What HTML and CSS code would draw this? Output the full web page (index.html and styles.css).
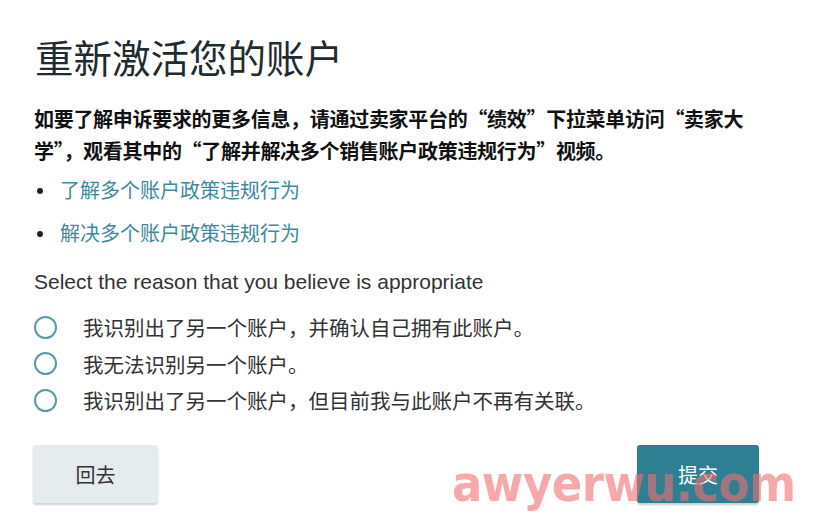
FILE: index.html
```html
<!DOCTYPE html>
<html lang="zh-CN">
<head>
  <meta charset="UTF-8">
  <title>重新激活您的账户</title>
  <link rel="stylesheet" href="styles.css">
</head>
<body>

<div class="page">
  <h1 class="title">重新激活您的账户</h1>

  <p class="intro">如要了解申诉要求的更多信息，请通过卖家平台的“绩效”下拉菜单访问“卖家大学”，观看其中的“了解并解决多个销售账户政策违规行为”视频。</p>

  <ul class="links">
    <li><a href="#">了解多个账户政策违规行为</a></li>
    <li><a href="#">解决多个账户政策违规行为</a></li>
  </ul>

  <div class="question">Select the reason that you believe is appropriate</div>

  <div class="options">
    <label class="option"><span class="radio"></span>我识别出了另一个账户，并确认自己拥有此账户。</label>
    <label class="option"><span class="radio"></span>我无法识别另一个账户。</label>
    <label class="option"><span class="radio"></span>我识别出了另一个账户，但目前我与此账户不再有关联。</label>
  </div>

  <div class="actions">
    <button class="btn btn-back">回去</button>
    <button class="btn btn-submit">提交</button>
  </div>
</div>

<!-- 水印 -->
<div class="watermark">awyerwu.com</div>

</body>
</html>
```

FILE: styles.css
```css
* {
  margin: 0;
  padding: 0;
  box-sizing: border-box;
}

html, body {
  height: 100%;
  background-color: #fff;
  font-family: "Noto Sans CJK SC", "Noto Sans", sans-serif;
  color: #333;
  overflow: hidden;
}

.page {
  padding: 30px 54px 0 34px;
}

.title {
  font-size: 38.5px;
  font-weight: 400;
  color: #1f2b30;
  line-height: 52px;
  margin-left: 1px;
  margin-bottom: 21px;
}

.intro {
  font-size: 20px;
  font-weight: 700;
  color: #111;
  line-height: 32px;
  letter-spacing: -0.3px;
}

.links {
  list-style: none;
  margin-top: 1px;
}

.links li {
  position: relative;
  padding-left: 26px;
  font-size: 20px;
  line-height: 43px;
}

.links li::before {
  content: "";
  position: absolute;
  left: 3px;
  top: 20px;
  width: 6px;
  height: 6px;
  border-radius: 50%;
  background: #1c2226;
}

.links a {
  color: #3d8a9b;
  text-decoration: none;
}

.question {
  font-family: "Liberation Sans", Arial, sans-serif;
  font-size: 21px;
  color: #333;
  margin-top: 14px;
  line-height: 28px;
}

.options {
  margin-top: 19px;
  display: flex;
  flex-direction: column;
  gap: 12.5px;
}

.option {
  display: flex;
  align-items: center;
  font-size: 20.5px;
  line-height: 24px;
  color: #333;
  cursor: pointer;
}

.radio {
  width: 23px;
  height: 23px;
  border: 2px solid #5a9aa6;
  border-radius: 50%;
  margin-right: 26px;
  flex-shrink: 0;
}

.actions {
  display: flex;
  justify-content: space-between;
  margin-top: 33px;
}

.btn {
  font-family: "Noto Sans CJK SC", sans-serif;
  font-size: 20px;
  border: none;
  border-radius: 3px;
  height: 58px;
  cursor: pointer;
}

.btn-back {
  width: 125px;
  margin-left: -1px;
  background-color: #e6ecee;
  color: #333;
  box-shadow: 0 2px 2px rgba(0, 0, 0, 0.18);
}

.btn-submit {
  width: 122px;
  background-color: #2e7f92;
  color: #fff;
  box-shadow: 0 2px 2px rgba(0, 0, 0, 0.2);
}

.watermark {
  position: absolute;
  left: 452px;
  top: 455px;
  font-family: "DejaVu Sans Condensed", "DejaVu Sans", sans-serif;
  font-weight: 700;
  font-size: 50px;
  color: rgba(240, 110, 115, 0.6);
  letter-spacing: -0.5px;
  pointer-events: none;
}
```
